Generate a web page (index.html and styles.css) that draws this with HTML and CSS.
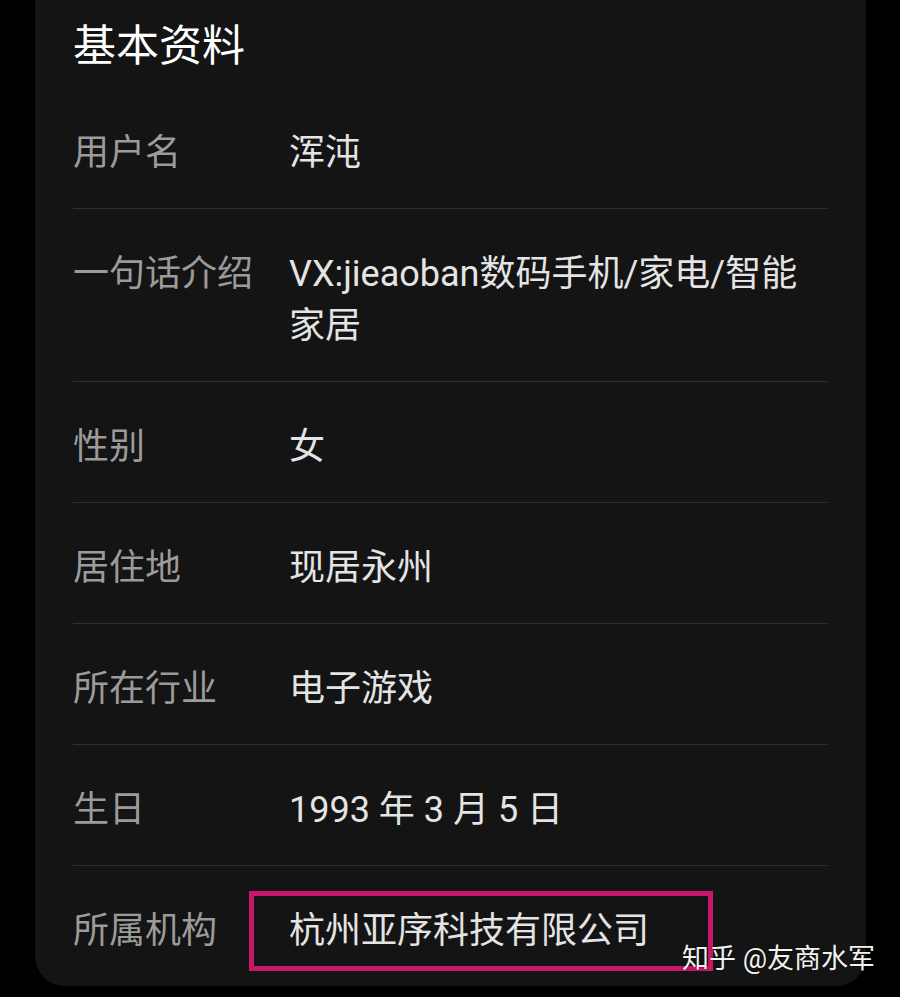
FILE: index.html
```html
<!DOCTYPE html>
<html lang="zh-CN">
<head>
<meta charset="utf-8">
<title>基本资料</title>
<link rel="stylesheet" href="styles.css">
</head>
<body>
<div class="card">
  <h1 class="title">基本资料</h1>
  <div class="row"><div class="label">用户名</div><div class="value">浑沌</div></div>
  <div class="row"><div class="label">一句话介绍</div><div class="value">VX:jieaoban数码手机/家电/智能家居</div></div>
  <div class="row"><div class="label">性别</div><div class="value">女</div></div>
  <div class="row"><div class="label">居住地</div><div class="value">现居永州</div></div>
  <div class="row"><div class="label">所在行业</div><div class="value">电子游戏</div></div>
  <div class="row"><div class="label">生日</div><div class="value">1993 年 3 月 5 日</div></div>
  <div class="row last"><div class="label">所属机构</div><div class="value">杭州亚序科技有限公司</div><div class="highlight"></div></div>
</div>
<div class="watermark">知乎 @友商水军</div>
</body>
</html>
```

FILE: styles.css
```css
html, body {
  margin: 0;
  padding: 0;
  background: #000;
  height: 997px;
  overflow: hidden;
}
body {
  position: relative;
  font-family: Roboto, "Noto Sans CJK SC", sans-serif;
}
.card {
  margin-left: 35px;
  width: 831px;
  box-sizing: border-box;
  padding: 0 39px 0 38px;
  background: #141414;
  border-radius: 0 0 30px 30px;
  height: 986px;
}
.title {
  margin: 0;
  padding: 24px 0 20px;
  font-size: 43px;
  line-height: 44px;
  font-weight: 400;
  color: #fff;
}
.row {
  display: grid;
  grid-template-columns: 216px 1fr;
  padding: 39px 0 29px;
  border-bottom: 1px solid #2f2f2f;
  font-size: 36px;
  line-height: 52px;
  position: relative;
}
.row.last {
  border-bottom: none;
}
.label {
  color: #9b9b9b;
}
.value {
  color: #e4e4e4;
}
.highlight {
  position: absolute;
  left: 176px;
  top: 25px;
  width: 454px;
  height: 70px;
  border: 5px solid #c8176a;
}
.watermark {
  position: absolute;
  left: 682px;
  top: 941px;
  font-size: 27px;
  line-height: 36px;
  color: #f2f2f2;
  text-shadow: 0 0 2px rgba(0,0,0,0.6);
}
```
